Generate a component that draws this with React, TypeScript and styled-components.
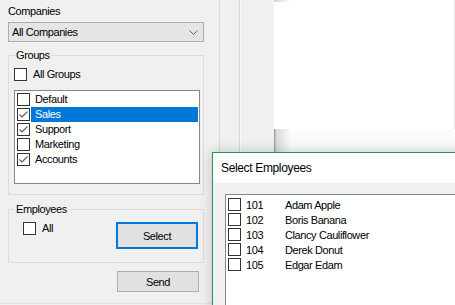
import React from 'react'
import styled, { createGlobalStyle } from 'styled-components'

const GlobalStyle = createGlobalStyle`
  html, body {
    margin: 0;
    padding: 0;
  }
  body {
    background: #f0f0f0;
    font-family: 'Liberation Sans', Arial, sans-serif;
    font-size: 11px;
    letter-spacing: -0.4px;
    color: #000;
  }
`

const groups = [
  { name: 'Default', checked: false, selected: false },
  { name: 'Sales', checked: true, selected: true },
  { name: 'Support', checked: true, selected: false },
  { name: 'Marketing', checked: false, selected: false },
  { name: 'Accounts', checked: true, selected: false },
]

const employees = [
  { id: '101', name: 'Adam Apple' },
  { id: '102', name: 'Boris Banana' },
  { id: '103', name: 'Clancy Cauliflower' },
  { id: '104', name: 'Derek Donut' },
  { id: '105', name: 'Edgar Edam' },
]

const CheckBox = ({ checked }: { checked?: boolean }) => (
  <Box>
    {checked ? (
      <svg width="11" height="11" viewBox="0 0 11 11">
        <polyline points="1.5,5.5 4,8 9.5,2.5" fill="none" stroke="#5a5a5a" strokeWidth="1.1" />
      </svg>
    ) : null}
  </Box>
)

const App = () => {
  return (
    <Screen>
      <GlobalStyle />
      <LeftPanel>
        <FieldLabel>Companies</FieldLabel>
        <Combo>
          <span>All Companies</span>
          <svg width="9" height="5" viewBox="0 0 9 5">
            <polyline points="0.5,0.5 4.5,4.5 8.5,0.5" fill="none" stroke="#606060" strokeWidth="1" />
          </svg>
        </Combo>

        <GroupBox $gap={7} $bottom={10}>
          <Legend>Groups</Legend>
          <CheckRow>
            <CheckBox />
            <CheckText>All Groups</CheckText>
          </CheckRow>
          <ListBox>
            {groups.map((g) => (
              <ListRow key={g.name}>
                <CheckBox checked={g.checked} />
                <ItemText $selected={g.selected}>{g.name}</ItemText>
              </ListRow>
            ))}
          </ListBox>
        </GroupBox>

        <GroupBox $gap={8} $bottom={13}>
          <Legend>Employees</Legend>
          <EmpRow>
            <CheckRow $indent={9}>
              <CheckBox />
              <CheckText>All</CheckText>
            </CheckRow>
            <Button $focused>Select</Button>
          </EmpRow>
        </GroupBox>

        <SendButton>Send</SendButton>
      </LeftPanel>

      <Gutter>
        <Rule />
        <DoubleRule />
      </Gutter>

      <BackWindow>
        <Pane />
        <PaneShadow />
      </BackWindow>

      <Dialog>
        <TitleBar>Select Employees</TitleBar>
        <DialogBody>
          <EmployeeList>
            {employees.map((e) => (
              <ListRow key={e.id}>
                <CheckBox />
                <EmpId>{e.id}</EmpId>
                <span>{e.name}</span>
              </ListRow>
            ))}
          </EmployeeList>
        </DialogBody>
      </Dialog>
    </Screen>
  )
}

export default App

const Screen = styled.div`
  width: 455px;
  height: 305px;
  position: relative;
  overflow: hidden;
  display: flex;
  background: #f0f0f0;
`

const LeftPanel = styled.div`
  width: 212px;
  height: 304px;
  flex-shrink: 0;
  box-sizing: border-box;
  padding: 5px 8px 0;
  display: flex;
  flex-direction: column;
  border-bottom: 1px solid #e3e3e3;
`

const FieldLabel = styled.div`
  line-height: 13px;
`

const Combo = styled.div`
  margin-top: 4px;
  height: 20px;
  box-sizing: border-box;
  border: 1px solid #adadad;
  background: #e5e5e5;
  display: flex;
  align-items: center;
  justify-content: space-between;
  padding: 0 5px 0 3px;
`

const GroupBox = styled.fieldset<{ $gap: number; $bottom: number }>`
  margin: ${(p) => p.$gap}px 0 0;
  padding: 6px 4px ${(p) => p.$bottom}px 5px;
  border: 1px solid #dcdcdc;
  min-width: 0;
`

const Legend = styled.legend`
  padding: 0 1px;
  margin-left: 1px;
  line-height: 13px;
`

const CheckRow = styled.div<{ $indent?: number }>`
  display: flex;
  align-items: center;
  height: 13px;
  margin-left: ${(p) => p.$indent ?? 0}px;
`

const Box = styled.span`
  width: 13px;
  height: 13px;
  flex-shrink: 0;
  box-sizing: border-box;
  border: 1px solid #333;
  background: #fff;
  display: flex;
  align-items: center;
  justify-content: center;
`

const CheckText = styled.span`
  margin-left: 6px;
  line-height: 13px;
`

const ListBox = styled.div`
  margin-top: 9px;
  width: 186px;
  height: 94px;
  box-sizing: border-box;
  border: 1px solid #828790;
  background: #fff;
  padding-top: 1px;
`

const ListRow = styled.div`
  height: 15px;
  display: flex;
  align-items: center;
  padding-left: 2px;
`

const ItemText = styled.span<{ $selected?: boolean }>`
  flex: 1;
  height: 15px;
  line-height: 15px;
  margin: 0 1px;
  padding-left: 4px;
  background: ${(p) => (p.$selected ? '#0078d7' : 'transparent')};
  color: ${(p) => (p.$selected ? '#fff' : '#000')};
`

const EmpRow = styled.div`
  display: flex;
  justify-content: space-between;
  align-items: flex-start;
  padding-right: 1px;
`

const Button = styled.div<{ $focused?: boolean }>`
  width: 82px;
  height: ${(p) => (p.$focused ? 27 : 21)}px;
  box-sizing: border-box;
  border: ${(p) => (p.$focused ? '2px solid #0078d7' : '1px solid #adadad')};
  background: #e1e1e1;
  display: flex;
  align-items: center;
  justify-content: center;
`

const SendButton = styled(Button)`
  margin-top: 8px;
  align-self: flex-end;
  margin-right: 5px;
`

const Gutter = styled.div`
  width: 62px;
  flex-shrink: 0;
  display: flex;
  padding-left: 7px;
  box-sizing: border-box;
`

const Rule = styled.div`
  width: 1px;
  background: #dadada;
`

const DoubleRule = styled.div`
  margin-left: 19px;
  width: 1px;
  border-right: 1px solid #fbfbfb;
  background: #d6d6d6;
`

const BackWindow = styled.div`
  flex: 1;
  display: flex;
  flex-direction: column;
`

const Pane = styled.div`
  height: 129px;
  background: #fff;
  border-right: 1px solid #e6e6e6;
  background-image: linear-gradient(to right, #d0d0d0, #fff 16px);
  background-size: 100% 2px;
  background-repeat: no-repeat;
`

const PaneShadow = styled.div`
  flex: 1;
  background:
    linear-gradient(to right, #8a8a8a 0, #d8d8d8 2px, rgba(240, 240, 240, 0) 16px),
    linear-gradient(to bottom, #fbfbfb, #e9e9e9);
`

const Dialog = styled.div`
  position: absolute;
  left: 212px;
  top: 152px;
  width: 260px;
  height: 170px;
  border: 1px solid #1e9a50;
  background: #f0f0f0;
  box-shadow: 0 0 12px rgba(0, 0, 0, 0.2);
  display: flex;
  flex-direction: column;
`

const TitleBar = styled.div`
  height: 30px;
  flex-shrink: 0;
  background: #fff;
  display: flex;
  align-items: center;
  padding-left: 8px;
  font-size: 12px;
  letter-spacing: -0.35px;
`

const DialogBody = styled.div`
  flex: 1;
  padding: 11px 0 0 12px;
`

const EmployeeList = styled.div`
  height: 200px;
  box-sizing: border-box;
  border: 1px solid #828790;
  background: #fff;
  padding-top: 2px;
`

const EmpId = styled.span`
  width: 39px;
  margin-left: 5px;
`
